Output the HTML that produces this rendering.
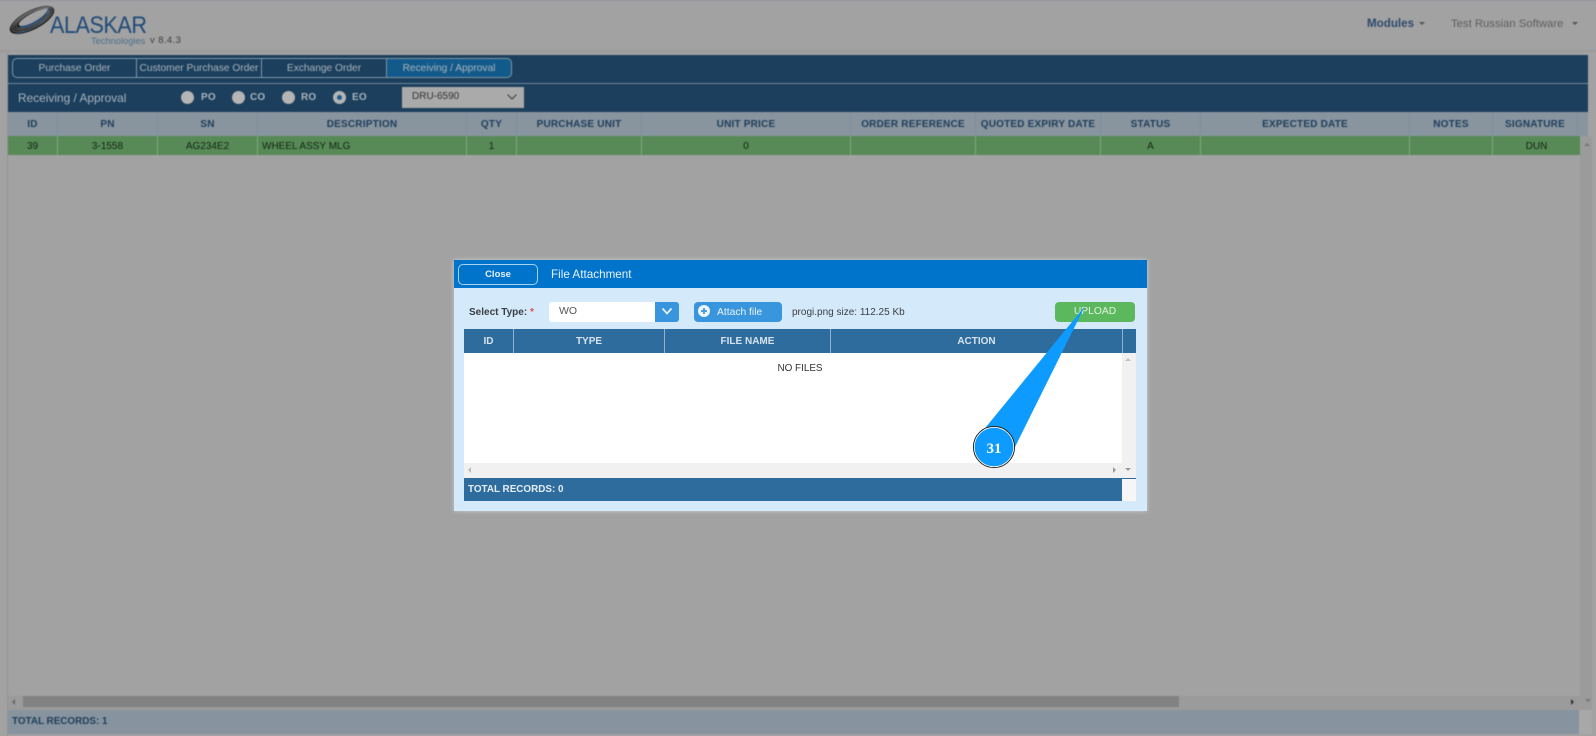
<!DOCTYPE html>
<html><head><meta charset="utf-8">
<style>
html,body{margin:0;padding:0}
body{width:1596px;height:736px;position:relative;overflow:hidden;background:#a2a2a2;font-family:"Liberation Sans",sans-serif;}
.a{position:absolute;white-space:nowrap}
.c{text-align:center}
#bg{position:absolute;left:0;top:0;width:1596px;height:736px;filter:blur(.45px)}
#md{position:absolute;left:0;top:0;width:1596px;height:736px;filter:blur(.25px)}
.tab{position:absolute;top:58px;height:20px;line-height:19px;font-size:10.2px;color:#a9b4bf;text-align:center;box-sizing:border-box;border:1px solid #7f97ab;border-left:none;white-space:nowrap}
.h{position:absolute;top:112px;height:24px;line-height:25px;font-size:10px;font-weight:bold;color:#1f3d5a;text-align:center;border-right:1px solid #7f8f9e;box-sizing:border-box;letter-spacing:.2px;white-space:nowrap}
.d{position:absolute;top:136px;height:19px;line-height:21px;font-size:10px;color:#10260f;text-align:center;border-right:1px solid #7fa87f;box-sizing:border-box;white-space:nowrap}
.r{position:absolute;top:91px;width:13px;height:13px;border-radius:50%;background:#b5b5b5}
.rl{position:absolute;top:91px;font-size:10px;font-weight:bold;color:#a9b4bf;letter-spacing:.2px;line-height:13px}
.mh{position:absolute;top:329px;height:24px;line-height:25px;font-size:10px;font-weight:bold;color:#d5e3ee;text-align:center;border-right:1px solid #8db4d2;box-sizing:border-box;white-space:nowrap}
</style></head><body>
<div id="bg">
<div class="a" style="left:0;top:0;width:1596px;height:1px;background:#8f939a"></div>
<div class="a" style="left:0;top:50px;width:1596px;height:2px;background:#9a9a9a"></div>
<svg class="a" style="left:7px;top:3px" width="50" height="32" viewBox="0 0 50 32">
<g transform="rotate(-27 25 17)">
<ellipse cx="25" cy="17" rx="24.5" ry="9.5" fill="#1c1c1e"/>
<path d="M2 20C10 27 38 27 48 17C42 24 14 27 2 20Z" fill="#1e4d80"/>
<g fill="none" stroke="#777" stroke-width=".7">
<ellipse cx="25.5" cy="16.5" rx="22.5" ry="8"/>
<ellipse cx="26" cy="16" rx="20.5" ry="6.8"/>
<ellipse cx="26.5" cy="15.7" rx="18.5" ry="5.8"/>
</g>
<ellipse cx="28" cy="15.5" rx="17" ry="4.6" fill="#a2a2a2"/>
<path d="M11 18C20 22 38 21 45 15" fill="none" stroke="#1e4d80" stroke-width="1.5"/>
</g></svg>
<div class="a" style="left:50px;top:13px;font-size:24px;line-height:26px;color:#1f4a78;transform:scaleX(.9);transform-origin:left;letter-spacing:-.5px">ALASKAR</div>
<div class="a" style="left:91px;top:35px;font-size:9.3px;line-height:12px;color:#4f6e8c">Technologies</div>
<div class="a" style="left:150px;top:35px;font-size:9.5px;line-height:12px;color:#3c3c3c;letter-spacing:.4px">v 8.4.3</div>
<div class="a" style="left:1367px;top:17px;font-size:11.6px;line-height:14px;font-weight:bold;color:#2d4a6c">Modules</div>
<div class="a" style="left:1419px;top:22px;border:3.5px solid transparent;border-top-color:#555;border-bottom:none"></div>
<div class="a" style="left:1451px;top:17px;font-size:11.3px;line-height:14px;color:#5f5f5f">Test Russian Software</div>
<div class="a" style="left:1572px;top:22px;border:3.5px solid transparent;border-top-color:#555;border-bottom:none"></div>

<div class="a" style="left:8px;top:55px;width:1580px;height:57px;background:#1b3f5c"></div>
<div class="a" style="left:8px;top:83px;width:1580px;height:1px;background:#6f8a9f"></div>
<div class="tab" style="left:12px;width:125px;border-left:1px solid #7f97ab;border-radius:5px 0 0 5px">Purchase Order</div>
<div class="tab" style="left:137px;width:125px">Customer Purchase Order</div>
<div class="tab" style="left:262px;width:125px">Exchange Order</div>
<div class="tab" style="left:387px;width:125px;background:#125a8a;border-radius:0 5px 5px 0">Receiving / Approval</div>
<div class="a" style="left:18px;top:90px;font-size:11.9px;line-height:16px;color:#a9b4bf">Receiving / Approval</div>
<div class="r" style="left:181px"></div><div class="rl" style="left:201px">PO</div>
<div class="r" style="left:232px"></div><div class="rl" style="left:250px">CO</div>
<div class="r" style="left:282px"></div><div class="rl" style="left:301px">RO</div>
<div class="r" style="left:333px"></div><div class="a" style="left:337px;top:95px;width:5px;height:5px;border-radius:50%;background:#1d5a8c"></div><div class="rl" style="left:352px">EO</div>
<div class="a" style="left:402px;top:87px;width:122px;height:21px;background:#aaa;font-size:10px;line-height:20px;color:#333;box-sizing:border-box;padding-left:10px">DRU-6590</div>
<svg class="a" style="left:506px;top:93px" width="12" height="8"><path d="M1.5 1.5L6 6L10.5 1.5" fill="none" stroke="#444" stroke-width="1.2"/></svg>

<div class="a" style="left:8px;top:112px;width:1580px;height:24px;background:#88949e"></div>
<div class="h" style="left:8px;width:50px">ID</div>
<div class="h" style="left:58px;width:100px">PN</div>
<div class="h" style="left:158px;width:100px">SN</div>
<div class="h" style="left:258px;width:209px">DESCRIPTION</div>
<div class="h" style="left:467px;width:50px">QTY</div>
<div class="h" style="left:517px;width:125px">PURCHASE UNIT</div>
<div class="h" style="left:642px;width:209px">UNIT PRICE</div>
<div class="h" style="left:851px;width:125px">ORDER REFERENCE</div>
<div class="h" style="left:976px;width:125px">QUOTED EXPIRY DATE</div>
<div class="h" style="left:1101px;width:100px">STATUS</div>
<div class="h" style="left:1201px;width:209px">EXPECTED DATE</div>
<div class="h" style="left:1410px;width:83px">NOTES</div>
<div class="h" style="left:1493px;width:85px">SIGNATURE</div>

<div class="a" style="left:8px;top:136px;width:1572px;height:19px;background:#588a58"></div>
<div class="d" style="left:8px;width:50px">39</div>
<div class="d" style="left:58px;width:100px">3-1558</div>
<div class="d" style="left:158px;width:100px">AG234E2</div>
<div class="d" style="left:258px;width:209px;text-align:left;padding-left:4px">WHEEL ASSY MLG</div>
<div class="d" style="left:467px;width:50px">1</div>
<div class="d" style="left:517px;width:125px"></div>
<div class="d" style="left:642px;width:209px">0</div>
<div class="d" style="left:851px;width:125px"></div>
<div class="d" style="left:976px;width:125px"></div>
<div class="d" style="left:1101px;width:100px">A</div>
<div class="d" style="left:1201px;width:209px"></div>
<div class="d" style="left:1410px;width:83px"></div>
<div class="d" style="left:1493px;width:87px;border-right:none">DUN</div>

<div class="a" style="left:7px;top:52px;width:1px;height:684px;background:#959595"></div>
<div class="a" style="left:1580px;top:136px;width:12px;height:574px;background:#9b9b9b"></div>
<div class="a" style="left:1584px;top:143px;border:3px solid transparent;border-bottom-color:#777;border-top:none"></div>
<div class="a" style="left:8px;top:696px;width:1572px;height:14px;background:#9b9b9b"></div>
<div class="a" style="left:23px;top:696px;width:1156px;height:11px;background:#828282"></div>
<div class="a" style="left:12px;top:699px;border:3px solid transparent;border-right-color:#666;border-left:none"></div>
<div class="a" style="left:1571px;top:699px;border:3.5px solid transparent;border-left-color:#333;border-right:none"></div>
<div class="a" style="left:1585px;top:699px;border:3px solid transparent;border-top-color:#777;border-bottom:none"></div>
<div class="a" style="left:8px;top:710px;width:1571px;height:24px;background:#87949f;color:#1f3d5a;font-size:9.9px;font-weight:bold;line-height:24px;box-sizing:border-box;padding-left:4px">TOTAL RECORDS: 1</div>
<div class="a" style="left:1579px;top:710px;width:13px;height:24px;background:#a8a8a8"></div>
</div>

<div id="md">
<div class="a" style="left:454px;top:260px;width:693px;height:251px;background:#d4e9fa;box-shadow:0 0 4px rgba(255,255,255,.5)"></div>
<div class="a" style="left:454px;top:260px;width:693px;height:28px;background:#0073cb"></div>
<div class="a c" style="left:458px;top:264px;width:80px;height:21px;line-height:19px;border:1px solid #a8d0ee;border-radius:5px;box-sizing:border-box;color:#e6f1fa;font-size:9.5px;font-weight:bold">Close</div>
<div class="a" style="left:551px;top:267px;font-size:11.7px;line-height:15px;color:#e8f2fa">File Attachment</div>
<div class="a" style="left:469px;top:306px;font-size:10px;line-height:14px;font-weight:bold;color:#3a3f44">Select Type: <span style="color:#d9534f">*</span></div>
<div class="a" style="left:549px;top:302px;width:106px;height:20px;background:#fff;font-size:10.5px;line-height:19px;color:#555;box-sizing:border-box;padding-left:10px;border-radius:3px 0 0 3px">WO</div>
<div class="a" style="left:655px;top:302px;width:24px;height:20px;background:#3a96dc;border-radius:0 3px 3px 0"></div>
<svg class="a" style="left:661px;top:307px" width="12" height="9"><path d="M1.5 1.5L6 6.5L10.5 1.5" fill="none" stroke="#e8f3fb" stroke-width="1.7"/></svg>
<div class="a" style="left:694px;top:302px;width:88px;height:20px;background:#3a96dc;border-radius:4px"></div>
<div class="a" style="left:698px;top:305px;width:12px;height:12px;border-radius:50%;background:#eef6fc"></div>
<svg class="a" style="left:698px;top:305px" width="12" height="12"><path d="M6 3V9M3 6H9" stroke="#3a96dc" stroke-width="1.7"/></svg>
<div class="a" style="left:717px;top:306px;font-size:10.3px;line-height:14px;color:#eaf4fb">Attach file</div>
<div class="a" style="left:792px;top:306px;font-size:10px;line-height:13px;color:#3a3f44">progi.png size: 112.25 Kb</div>
<div class="a c" style="left:1055px;top:302px;width:80px;height:20px;background:#5cb85c;border-radius:4px;font-size:10.3px;line-height:20px;color:#e4f3e4">UPLOAD</div>

<div class="a" style="left:464px;top:329px;width:672px;height:24px;background:#2e6c9e"></div>
<div class="mh" style="left:464px;width:50px">ID</div>
<div class="mh" style="left:514px;width:151px">TYPE</div>
<div class="mh" style="left:665px;width:166px">FILE NAME</div>
<div class="mh" style="left:831px;width:292px">ACTION</div>
<div class="a" style="left:464px;top:353px;width:672px;height:125px;background:#fff"></div>
<div class="a c" style="left:464px;top:362px;width:672px;font-size:9.9px;line-height:13px;color:#333;box-sizing:border-box">NO FILES</div>
<div class="a" style="left:1122px;top:353px;width:14px;height:125px;background:#f1f1f1"></div>
<div class="a" style="left:464px;top:463px;width:672px;height:15px;background:#f1f1f1"></div>
<div class="a" style="left:1125px;top:358px;border:3.5px solid transparent;border-bottom-color:#c4c4c4;border-top:none"></div>
<div class="a" style="left:468px;top:467px;border:3.5px solid transparent;border-right-color:#bbb;border-left:none"></div>
<div class="a" style="left:1113px;top:467px;border:3.5px solid transparent;border-left-color:#999;border-right:none"></div>
<div class="a" style="left:1125px;top:468px;border:3.5px solid transparent;border-top-color:#999;border-bottom:none"></div>
<div class="a" style="left:464px;top:478px;width:658px;height:23px;background:#2e6c9e;color:#e3edf5;font-size:9.9px;font-weight:bold;line-height:23px;box-sizing:border-box;padding-left:4px">TOTAL RECORDS: 0</div>
<div class="a" style="left:1122px;top:478px;width:14px;height:23px;background:#f6f6f6;border-top:1px solid #2e6c9e;box-sizing:border-box"></div>
</div>

<svg class="a" style="left:0;top:0" width="1596" height="736">
<polygon points="1085,306 986,427 1014,449" fill="#0d9bff"/>
<circle cx="994" cy="447" r="20" fill="#0d9bff" stroke="#fff" stroke-width="1.4"/>
<circle cx="994" cy="447" r="20.6" fill="none" stroke="#222" stroke-width="1"/>
<text x="994" y="453" text-anchor="middle" font-family="Liberation Serif, serif" font-weight="bold" font-size="15" fill="#fff">31</text>
</svg>
</body></html>
